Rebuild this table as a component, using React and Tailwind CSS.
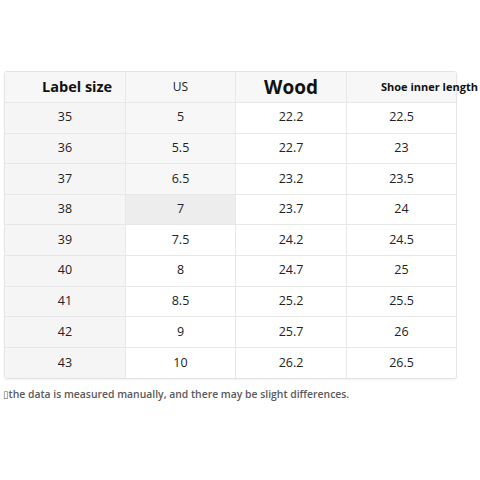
const rows = [
  ["35", "5", "22.2", "22.5"],
  ["36", "5.5", "22.7", "23"],
  ["37", "6.5", "23.2", "23.5"],
  ["38", "7", "23.7", "24"],
  ["39", "7.5", "24.2", "24.5"],
  ["40", "8", "24.7", "25"],
  ["41", "8.5", "25.2", "25.5"],
  ["42", "9", "25.7", "26"],
  ["43", "10", "26.2", "26.5"],
];

export default function App() {
  return (
    <div
      className="w-[480px] h-[480px] bg-white pt-[71px] pl-[4px] text-[#222]"
      style={{ fontFamily: '"Open Sans", "Noto Sans", "DejaVu Sans", sans-serif' }}
    >
      <div className="w-[453px] border border-[#e4e4e4] rounded-[3px] shadow-[0_1px_2px_rgba(0,0,0,0.06)]">
        <div className="grid grid-cols-[121px_110px_111px_1fr] h-[31px] bg-[#f7f7f7] border-b border-[#e8e8e8]">
          <div className="flex items-center pl-[37px] text-[14.5px] font-bold text-[#111] border-r border-[#e8e8e8]">
            Label size
          </div>
          <div className="flex items-center justify-center text-[12px] border-r border-[#e8e8e8]">US</div>
          <div className="flex items-center justify-center text-[19px] font-bold text-[#111] border-r border-[#e8e8e8]">
            Wood
          </div>
          <div className="flex items-center pl-[34px] text-[11px] font-bold text-[#111] whitespace-nowrap overflow-visible">
            Shoe inner length
          </div>
        </div>
        {rows.map((r, i) => {
          const usBg = i < 3 ? "bg-[#f7f7f7]" : i === 3 ? "bg-[#ededed]" : "bg-white";
          return (
            <div
              key={r[0]}
              className={`grid grid-cols-[121px_110px_111px_1fr] h-[30.6px] text-[12.5px] ${
                i < rows.length - 1 ? "border-b border-[#e8e8e8]" : ""
              }`}
            >
              <div className="flex items-center justify-center bg-[#f5f5f5] border-r border-[#e8e8e8]">{r[0]}</div>
              <div className={`flex items-center justify-center border-r border-[#e8e8e8] ${usBg}`}>{r[1]}</div>
              <div className="flex items-center justify-center border-r border-[#e8e8e8]">{r[2]}</div>
              <div className="flex items-center justify-center">{r[3]}</div>
            </div>
          );
        })}
      </div>
      <div className="mt-[8px] -ml-[1px] text-[10.4px] font-semibold text-[#5a5a5a] whitespace-nowrap">
        <span style={{ fontFamily: '"DejaVu Sans", sans-serif' }} className="font-normal text-[10px]">▯</span>
        the data is measured manually, and there may be slight differences.
      </div>
    </div>
  );
}
